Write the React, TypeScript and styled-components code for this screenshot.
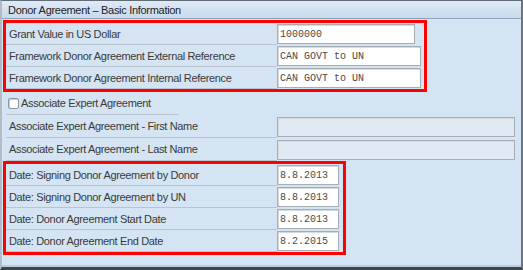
import styled, { createGlobalStyle } from "styled-components";

const GlobalStyle = createGlobalStyle`
  html, body {
    margin: 0;
    padding: 0;
    background: #ffffff;
  }
  body {
    font-family: "Liberation Sans", Arial, sans-serif;
  }
`;

const Panel = styled.div`
  box-sizing: border-box;
  width: 523px;
  height: 270px;
  background: #d4e4f2;
  border-top: 1px solid #5f6c78;
  border-left: 2px solid #b3bcc6;
  border-right: 2px solid #6b7480;
  border-bottom: 3px solid #3d444c;
  box-shadow: inset 0 -2px 0 #b8cce0;
  display: flex;
  flex-direction: column;
`;

const Header = styled.div`
  height: 17px;
  display: flex;
  align-items: center;
  padding-left: 6px;
  background: linear-gradient(#dfeaf5, #c8daec);
  border-bottom: 1px solid #8ea3b8;
  color: #222;
  font-size: 11px;
  letter-spacing: -0.3px;
`;

const Body = styled.div`
  display: flex;
  flex-direction: column;
  padding: 1px 0 0 1px;
`;

const Group = styled.div<{ $width: number }>`
  width: ${({ $width }) => $width}px;
  border: 3px solid #ff0000;
  box-sizing: border-box;
  display: flex;
  flex-direction: column;
`;

const Plain = styled.div`
  display: flex;
  flex-direction: column;
  padding-left: 3px;
`;

const Row = styled.div<{ $height: number }>`
  display: flex;
  align-items: center;
  height: ${({ $height }) => $height}px;
`;

const Label = styled.div`
  box-sizing: border-box;
  width: 271px;
  height: 100%;
  display: flex;
  align-items: center;
  padding-left: 3px;
  font-size: 11px;
  letter-spacing: -0.35px;
  color: #3a3a3a;
  border-bottom: 1px solid #b9c4cf;
  flex-shrink: 0;
`;

const CheckLabel = styled.label`
  box-sizing: border-box;
  width: 173px;
  margin-right: 98px;
  height: 100%;
  display: flex;
  align-items: center;
  gap: 2px;
  padding-left: 2px;
  font-size: 11px;
  letter-spacing: -0.35px;
  color: #3a3a3a;
  border-bottom: 1px solid #b9c4cf;
`;

const Box = styled.span`
  width: 11px;
  height: 11px;
  box-sizing: border-box;
  background: #ffffff;
  border: 1px solid #8d969f;
  border-radius: 2px;
  box-shadow: inset 1px 1px 1px #c8ccd0;
`;

const Field = styled.div<{ $width: number; $disabled?: boolean }>`
  box-sizing: border-box;
  width: ${({ $width }) => $width}px;
  height: 20px;
  padding-left: 2px;
  display: flex;
  align-items: center;
  background: ${({ $disabled }) => ($disabled ? "#dfeaf4" : "#ffffff")};
  border: 1px solid #a5adb5;
  box-shadow: inset 1px 1px 0 #d6dadd;
  font-family: "Liberation Mono", "Courier New", monospace;
  font-size: 10px;
  color: #4a4a4a;
`;

const topFields = [
  { label: "Grant Value in US Dollar", value: "1000000", width: 138 },
  { label: "Framework Donor Agreement External Reference", value: "CAN GOVT to UN", width: 144 },
  { label: "Framework Donor Agreement Internal Reference", value: "CAN GOVT to UN", width: 144 },
];

const dateFields = [
  { label: "Date: Signing Donor Agreement by Donor", value: "8.8.2013" },
  { label: "Date: Signing Donor Agreement by UN", value: "8.8.2013" },
  { label: "Date: Donor Agreement Start Date", value: "8.8.2013" },
  { label: "Date: Donor Agreement End Date", value: "8.2.2015" },
];

export default function App() {
  return (
    <>
      <GlobalStyle />
      <Panel>
        <Header>Donor Agreement – Basic Information</Header>
        <Body>
          <Group $width={424}>
            {topFields.map((f) => (
              <Row key={f.label} $height={22}>
                <Label>{f.label}</Label>
                <Field $width={f.width}>{f.value}</Field>
              </Row>
            ))}
          </Group>

          <Plain>
            <Row $height={23}>
              <CheckLabel>
                <Box />
                Associate Expert Agreement
              </CheckLabel>
            </Row>
            <Row $height={23}>
              <Label>Associate Expert Agreement - First Name</Label>
              <Field $width={238} $disabled />
            </Row>
            <Row $height={23}>
              <Label>Associate Expert Agreement - Last Name</Label>
              <Field $width={238} $disabled />
            </Row>
          </Plain>

          <Group $width={343}>
            {dateFields.map((f) => (
              <Row key={f.label} $height={22}>
                <Label>{f.label}</Label>
                <Field $width={62}>{f.value}</Field>
              </Row>
            ))}
          </Group>
        </Body>
      </Panel>
    </>
  );
}
